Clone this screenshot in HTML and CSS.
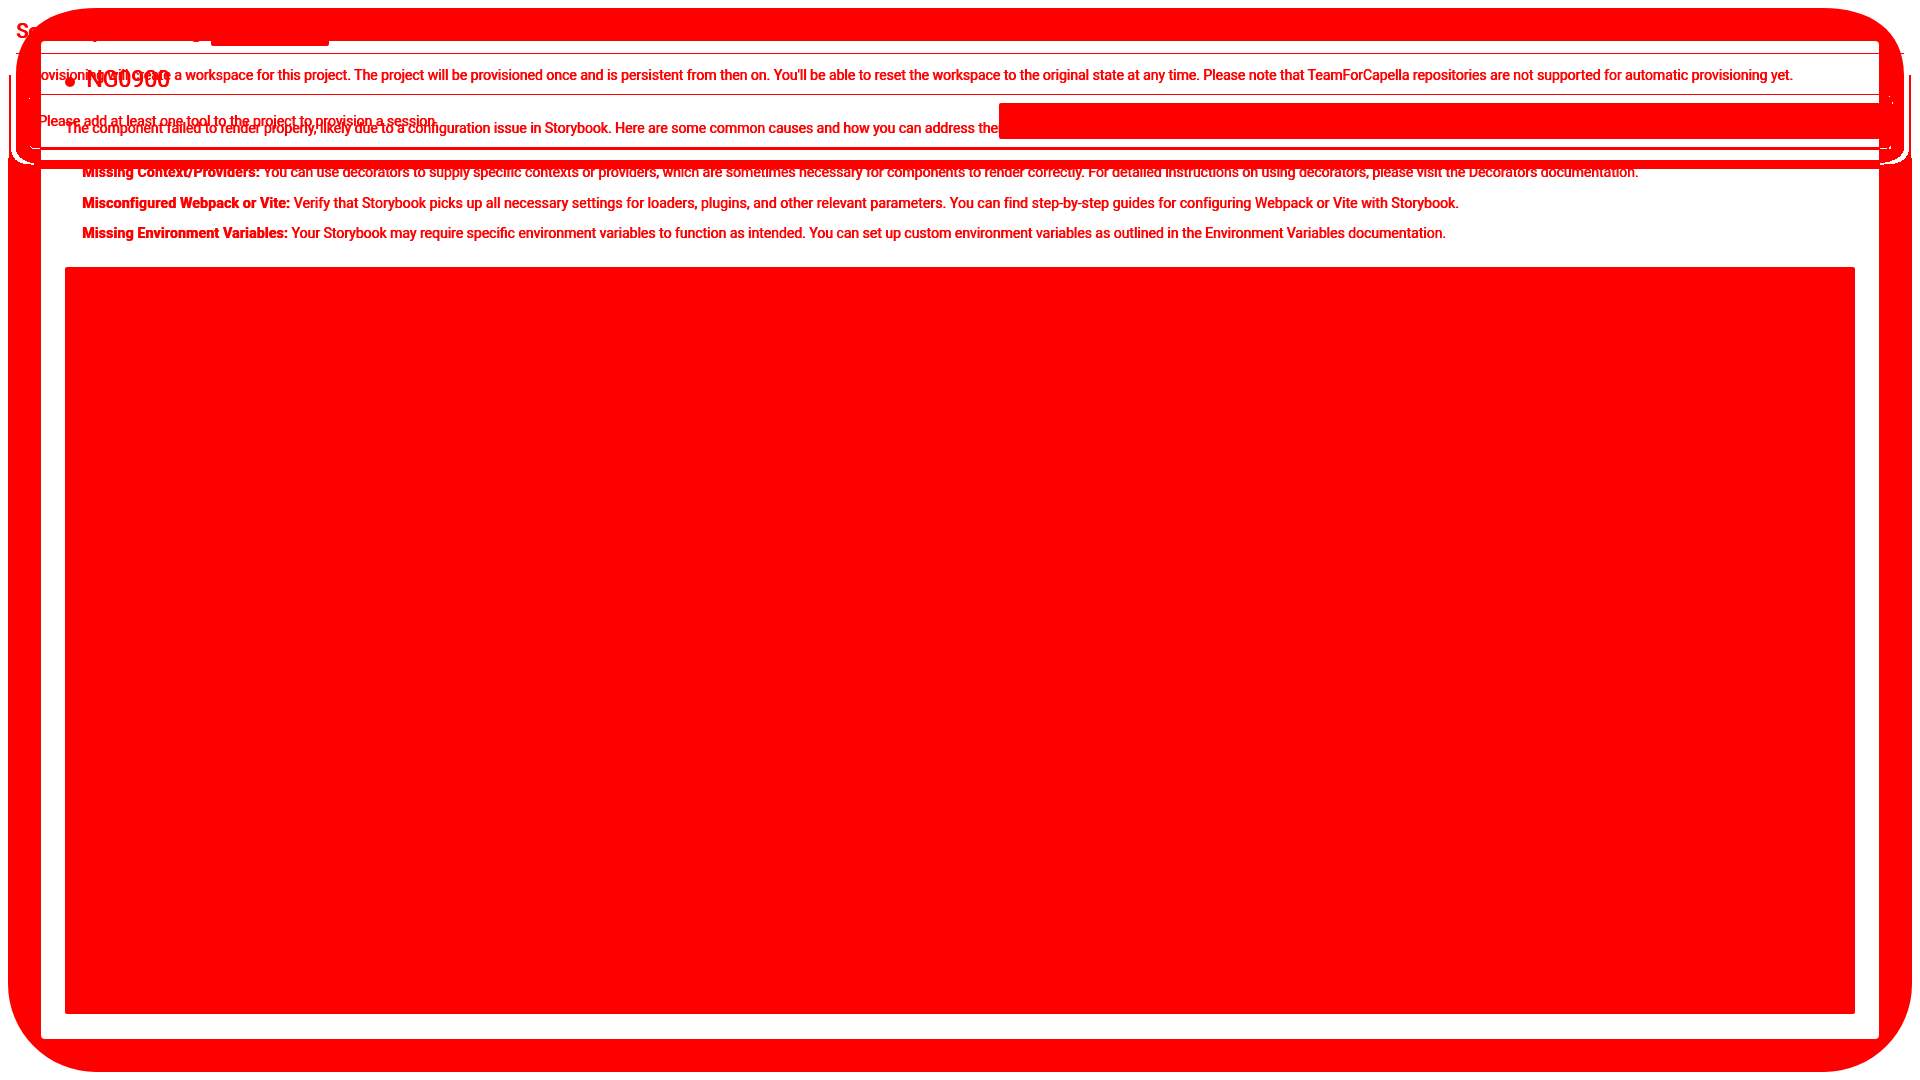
FILE: index.html
```html
<!DOCTYPE html>
<html lang="en">
<head>
    <meta charset="UTF-8">
    <title>Session provisioning</title>
    <link rel="stylesheet" href="styles.css">
</head>
<body>
    <svg class="filter-defs" width="0" height="0">
        <filter id="hardEdges" color-interpolation-filters="sRGB" x="0" y="0" width="100%" height="100%">
            <feComponentTransfer>
                <feFuncG type="discrete" tableValues="0 0 0 0 0 0 0 0 0 0 0 0 0 0 0 0 0 0 0 0 0 0 0 0 0 0 0 0 0 0 0 1"/>
                <feFuncB type="discrete" tableValues="0 0 0 0 0 0 0 0 0 0 0 0 0 0 0 0 0 0 0 0 0 0 0 0 0 0 0 0 0 0 0 1"/>
            </feComponentTransfer>
        </filter>
    </svg>

    <main class="page">
        <section class="story-error">
            <h1 class="error-title"><span class="error-dot"></span>NG0900</h1>
            <p class="error-intro">The component failed to render properly, likely due to a configuration issue in Storybook. Here are some common causes and how you can address them:</p>
            <ul class="error-causes">
                <li><strong>Missing Context/Providers:</strong> You can use decorators to supply specific contexts or providers, which are sometimes necessary for components to render correctly. For detailed instructions on using decorators, please visit the Decorators documentation.</li>
                <li class="cause-wide"><strong>Misconfigured Webpack or Vite:</strong> Verify that Storybook picks up all necessary settings for loaders, plugins, and other relevant parameters. You can find step-by-step guides for configuring Webpack or Vite with Storybook.</li>
                <li><strong>Missing Environment Variables:</strong> Your Storybook may require specific environment variables to function as intended. You can set up custom environment variables as outlined in the Environment Variables documentation.</li>
            </ul>
            <pre class="error-stack"></pre>
        </section>

        <section class="session-card">
            <header class="card-head">
                <h2>Session provisioning</h2>
                <span class="head-tab"></span>
            </header>
            <p class="card-info">Provisioning will create a workspace for this project. The project will be provisioned once and is persistent from then on. You'll be able to reset the workspace to the original state at any time. Please note that TeamForCapella repositories are not supported for automatic provisioning yet.</p>
            <div class="card-action">
                <span>Please add at least one tool to the project to provision a session.</span>
                <button class="action-button" type="button"></button>
            </div>
            <div class="card-foot"></div>
        </section>

        <!-- thick rounded frame around the whole window -->
        <svg class="frame" viewBox="0 0 1920 1080" width="1920" height="1080">
            <path class="frame-red" fill-rule="evenodd" d="M97 8H1823C1870 8 1904 30 1904 75H1911V158H1912V984A88 88 0 0 1 1824 1072H96A88 88 0 0 1 8 984V158H9V75H16C16 30 50 8 97 8Z M45 41Q41 41 41 45V1035Q41 1039 45 1039H1875Q1879 1039 1879 1035V45Q1879 41 1875 41Z"/>
            <path class="frame-gap" d="M11 73H16V148Q18 160 34 163V165Q14 166 11 152Z"/>
            <path class="frame-gap" d="M1909 73H1904V148Q1902 160 1880 163V165Q1906 166 1909 152Z"/>
            <path class="frame-gap" d="M30 95L31 96L29 102L28 102Z M29 146H31L34 148H40V149H32Z"/>
            <path class="frame-gap" d="M1889 95L1891 97L1889 98Z M1892 102H1893V104H1892Z M1880 148H1887V149H1880Z M1890 145L1892 146L1891 149L1888 149Z"/>
        </svg>
    </main>
</body>
</html>
```

FILE: styles.css
```css
:root {
    --mark-color: #ff0000;
    --paper: #ffffff;
}

* {
    box-sizing: border-box;
    margin: 0;
    padding: 0;
}

body {
    background-color: var(--paper);
    color: var(--mark-color);
    font-family: 'Roboto', sans-serif;
    font-size: 14px;
    line-height: 20px;
}

.filter-defs {
    position: absolute;
}

.page {
    position: relative;
    width: 1920px;
    height: 1080px;
    overflow: hidden;
    filter: url(#hardEdges);
    text-shadow: 0.7px 0 0 var(--mark-color);
}

/* storybook error page */
.story-error {
    padding: 70px 65px 0;
}

.error-title {
    display: flex;
    align-items: center;
    gap: 11px;
    height: 20px;
    font-size: 23px;
    font-weight: 400;
}

.error-dot {
    width: 10px;
    height: 10px;
    margin-top: 4px;
    border-radius: 50%;
    background-color: var(--mark-color);
}

.error-intro {
    margin-top: 28px;
}

.error-causes {
    list-style: none;
    margin-top: 24px;
    padding-left: 17px;
}

.error-causes li {
    margin-bottom: 10.5px;
}

.error-causes strong {
    letter-spacing: 0.22px;
}

.cause-wide {
    letter-spacing: 0.09px;
}

.error-stack {
    height: 747px;
    margin-top: 24px;
    border-radius: 2px;
    background-color: var(--mark-color);
}

/* provisioning card laid over the error page */
.session-card {
    position: absolute;
    top: 16px;
    left: 16px;
    width: 1888px;
}

.card-head {
    display: flex;
    align-items: center;
    gap: 9px;
    height: 30px;
    margin-bottom: 7px;
}

.card-head h2 {
    font-size: 20px;
    font-weight: 500;
    line-height: 28px;
}

.head-tab {
    width: 118px;
    height: 30px;
    border-radius: 2px;
    background-color: var(--mark-color);
}

.card-info {
    display: flex;
    align-items: center;
    height: 42px;
    padding: 2px 0 0 11px;
    border-top: 1px solid var(--mark-color);
    border-bottom: 1px solid var(--mark-color);
    white-space: nowrap;
}

.card-action {
    display: flex;
    align-items: center;
    justify-content: space-between;
    height: 55px;
    padding: 0 24px 0 22px;
    border-bottom: 3px solid var(--mark-color);
}

.action-button {
    width: 881px;
    height: 36px;
    border: none;
    border-radius: 2px;
    background-color: var(--mark-color);
}

.card-foot {
    height: 9px;
    margin-top: 10px;
    background-color: var(--mark-color);
}

/* frame sits on top of everything */
.frame {
    position: absolute;
    top: 0;
    left: 0;
}

.frame-red {
    fill: var(--mark-color);
}

.frame-gap {
    fill: var(--paper);
}
```
